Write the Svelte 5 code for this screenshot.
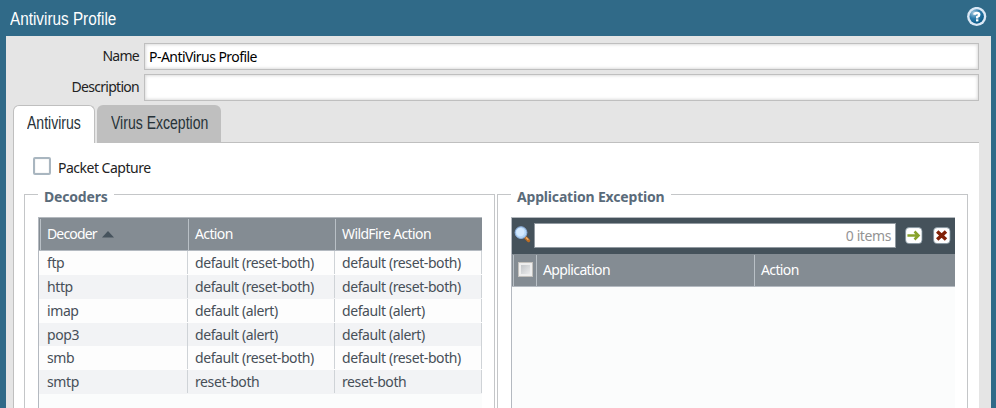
<script>
  const rows = [
    { name: 'ftp', action: 'default (reset-both)', wildfire: 'default (reset-both)' },
    { name: 'http', action: 'default (reset-both)', wildfire: 'default (reset-both)' },
    { name: 'imap', action: 'default (alert)', wildfire: 'default (alert)' },
    { name: 'pop3', action: 'default (alert)', wildfire: 'default (alert)' },
    { name: 'smb', action: 'default (reset-both)', wildfire: 'default (reset-both)' },
    { name: 'smtp', action: 'reset-both', wildfire: 'reset-both' }
  ];
</script>

<div class="window">
  <header>
    <h1>Antivirus Profile</h1>
    <svg class="help" width="20" height="20" viewBox="0 0 20 20">
      <defs>
        <radialGradient id="ball" cx="0.3" cy="0.25" r="0.85">
          <stop offset="0" stop-color="#a9cbe0" />
          <stop offset="0.45" stop-color="#2c7bab" />
          <stop offset="1" stop-color="#075581" />
        </radialGradient>
      </defs>
      <circle cx="9.7" cy="9.5" r="9.6" fill="#dbe8f5" />
      <circle cx="9.7" cy="9.5" r="7.2" fill="url(#ball)" />
      <path d="M7.3 7.8Q7.6 6 9.9 6Q12.3 6 12.3 7.8Q12.3 9.2 10.2 10V11.4" fill="none" stroke="#fff" stroke-width="2.4" />
      <rect x="9" y="12.3" width="2.4" height="2.1" fill="#fff" />
    </svg>
  </header>

  <main>
    <div class="form">
      <div class="field"><label for="name"><span>Name</span></label><div id="name" class="box"><span>P-AntiVirus Profile</span></div></div>
      <div class="field"><label for="desc"><span>Description</span></label><div id="desc" class="box"></div></div>
    </div>

    <nav>
      <div class="tab active"><span>Antivirus</span></div>
      <div class="tab other"><span>Virus Exception</span></div>
      <div class="rest"></div>
    </nav>

    <section class="body">
      <div class="capture"><i class="check"></i><span>Packet Capture</span></div>
      <div class="groups">
        <div class="group">
          <div class="legend one"><b>Decoders</b></div>
          <div class="grid">
            <div class="head">
              <div class="cell c1"><span class="sorted">Decoder</span><svg width="12" height="7" viewBox="0 0 12 7"><path d="M0 6.5L6 0L12 6.5Z" fill="#46535d" /></svg></div>
              <div class="cell c2"><span>Action</span></div>
              <div class="cell c3"><span>WildFire Action</span></div>
            </div>
            {#each rows as row}
              <div class="row">
                <div class="cell c1"><span>{row.name}</span></div>
                <div class="cell c2"><span>{row.action}</span></div>
                <div class="cell c3"><span>{row.wildfire}</span></div>
              </div>
            {/each}
          </div>
        </div>

        <div class="group">
          <div class="legend two"><b>Application Exception</b></div>
          <div class="grid">
            <div class="toolbar">
              <svg class="lens" width="18" height="18" viewBox="0 0 18 18">
                <path d="M11.8 11.8L14.6 14.6" stroke="#bb6d24" stroke-width="3.2" stroke-linecap="round" />
                <path d="M12 11.5L14.3 13.7" stroke="#edae6c" stroke-width="1.3" />
                <circle cx="7" cy="6.6" r="5.9" fill="#b5d7f8" stroke="#8caedb" stroke-width="1" />
                <circle cx="6.4" cy="6.1" r="4.2" fill="#d3e9ff" />
              </svg>
              <div class="search"><span>0 items</span></div>
              <svg class="go" width="18" height="18" viewBox="0 0 18 18">
                <rect x="0.6" y="0.6" width="16.4" height="16" rx="3.5" fill="#fff" stroke="#8294a0" stroke-width="0.8" />
                <path d="M2.4 8.5H13M9.5 4.5L13.5 8.5L9.5 12.5" fill="none" stroke="#88a22b" stroke-width="2.5" />
              </svg>
              <svg class="clear" width="18" height="18" viewBox="0 0 18 18">
                <rect x="0.6" y="0.6" width="16.4" height="16" rx="3.5" fill="#fff" stroke="#8294a0" stroke-width="0.8" />
                <path d="M4.2 4.5L13 12.5M13 4.5L4.2 12.5" stroke="#812107" stroke-width="3.5" />
              </svg>
            </div>
            <div class="head second">
              <div class="cell pick"><i></i></div>
              <div class="cell app"><span>Application</span></div>
              <div class="cell act"><span>Action</span></div>
            </div>
          </div>
        </div>
      </div>
    </section>
  </main>
</div>

<style>
  :global(body) { margin: 0; overflow: hidden; }
  * { box-sizing: border-box; }
  .window {
    height: 408px; background: #306a88; overflow: hidden;
    font: 14px/20px "Noto Sans", sans-serif; color: #222;
    display: flex; flex-direction: column;
  }
  span, b { white-space: nowrap; display: inline-block; }
  header { height: 36px; flex: none; display: flex; justify-content: space-between; padding: 7px 10px 0; }
  h1 {
    margin: 1px 0 0; font: 400 18px/22px "Liberation Sans Narrow", "Liberation Sans", sans-serif;
    color: #fff; white-space: nowrap; transform: scaleX(.85); transform-origin: 0 0;
  }
  .help { margin: 0 -1px 0 0; }
  main { flex: 1; min-height: 0; margin: 0 5px 0 6px; background: #e5e5e5; padding: 7px 12px 0 7px; display: flex; flex-direction: column; }
  .form { display: flex; flex-direction: column; gap: 4px; height: 62px; flex: none; }
  .field { display: flex; height: 27px; }
  label { width: 131px; padding: 3px 5px 0 0; text-align: right; letter-spacing: -.72px; }
  .box {
    flex: 1; background: #fff; border: 1px solid #bfbfbf; padding: 3px 0 0 4px; color: #000;
    box-shadow: inset 0 0 3px 1px #ddd; letter-spacing: -.55px;
  }
  nav { display: flex; height: 38px; flex: none; }
  .tab {
    border-radius: 6px 6px 0 0; color: #273238;
    font: 18px/22px "Liberation Sans Narrow", "Liberation Sans", sans-serif; padding: 7px 0 0 13.5px;
  }
  .tab span { transform: scaleX(.78); transform-origin: 0 0; }
  .active { width: 82px; background: #fff; border: 1px solid #bfbfbf; border-bottom: 0; padding: 6px 0 0 12.5px; }
  .other { width: 124px; margin-left: 2px; background: #bfbfbf; }
  .rest { flex: 1; border-bottom: 1px solid #bfbfbf; }
  .body { flex: 1; min-height: 0; background: #fff; border-left: 1px solid #bfbfbf; padding: 14px 11px 0 10px; display: flex; flex-direction: column; }
  .capture { display: flex; height: 37px; flex: none; padding-left: 9px; gap: 7px; }
  .capture span { margin-top: 1px; letter-spacing: -.5px; }
  .check { width: 18px; height: 18px; border: 2px solid #a9b6c0; border-radius: 2px; background: #fff; box-shadow: inset 0 0 1px #bbb; }
  .groups { flex: 1; min-height: 0; display: flex; gap: 2px; }
  .group { flex: 1; min-width: 0; border: 1px solid #c4c6c8; border-bottom: 0; padding: 0 12px 0 13px; display: flex; flex-direction: column; }
  .legend { height: 22px; flex: none; letter-spacing: -.18px; }
  .legend b { position: relative; top: -8px; background: #fff; padding: 0 6px; color: #5a6b7a; }
  .grid { flex: 1; border-top: 1px solid #b4b9be; border-left: 1px solid #b4b9c0; background: #fbfcfc; }
  .head { height: 33px; background: #848c93; border-bottom: 1px solid #b4bac1; display: flex; color: #fff; padding: 1px 0 0 1px; letter-spacing: -.62px; }
  .head .cell { border-left: 1px solid #b9c0c6; padding: 5px 0 0 6px; }
  .sorted { letter-spacing: -.85px; }
  .head svg { margin: 0 0 1px 5px; }
  .head .c1 { width: 148px; }
  .head .c2 { width: 147px; }
  .row { height: 24px; display: flex; color: #474f58; background: #fdfdfd; letter-spacing: -.4px; }
  .row:nth-child(odd) { background: #f2f3f5; }
  .row:nth-child(5) { height: 23px; }
  .row .cell { border-right: 1px solid #cfd3d7; padding: 2px 0 0 7px; height: 23px; }
  .row .c1 { width: 149px; padding-left: 8px; }
  .row .c2 { width: 147px; }
  .row .c3 { width: 147px; }
  .toolbar { height: 36px; background: #45525b; display: flex; padding: 5px 4px 0 2px; }
  .lens { margin: 3px 0 0; }
  .search { flex: 1; height: 25px; margin-left: 2px; background: #fff; border: 1px solid #929aa1; color: #949494; text-align: right; padding: 2px 4px 0 0; letter-spacing: -.4px; }
  .go { margin: 4px 10px 0 9px; }
  .clear { margin-top: 4px; }
  .pick { width: 23px; }
  .head .pick { padding: 7px 0 0 4px; }
  .pick i { display: block; width: 15px; height: 15px; border: 1px solid #c3c1bd; background: linear-gradient(135deg, #b9bdc1, #f4f4f4); box-shadow: inset 0 0 0 2px #eee; }
  .app { width: 218px; }
</style>
